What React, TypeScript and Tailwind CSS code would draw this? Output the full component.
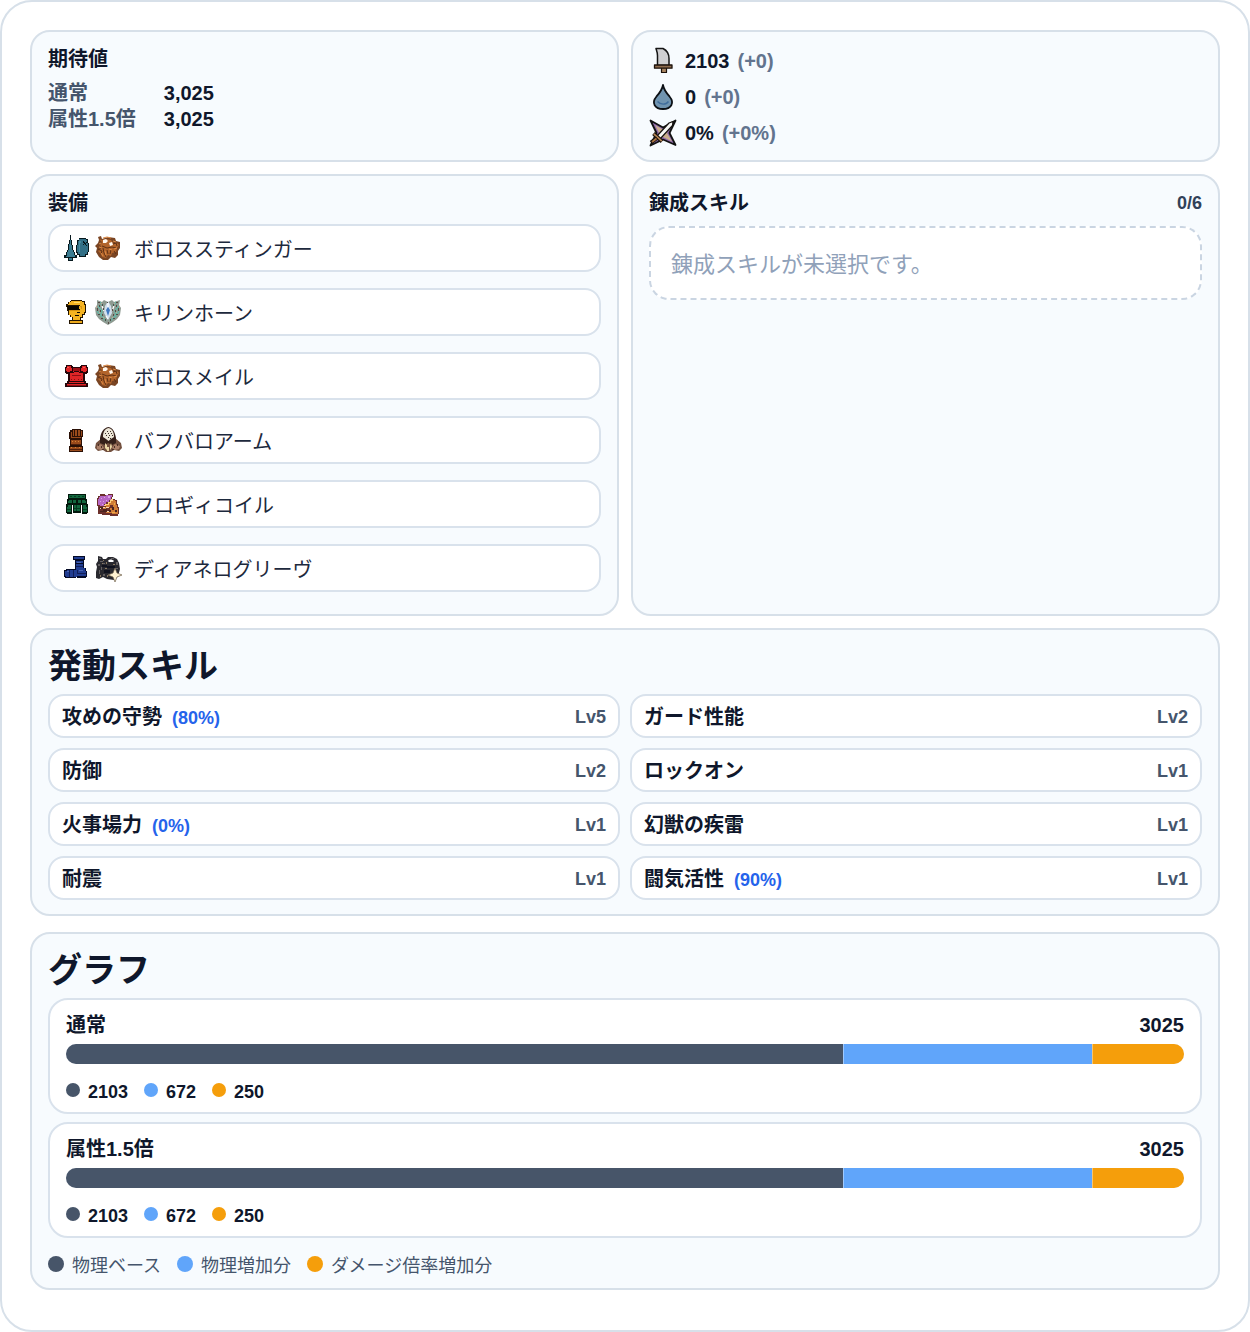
import type { ReactNode } from "react";

const FONT =
  "font-['Liberation_Sans','Noto_Sans_CJK_JP',sans-serif]";

function Icon({ label, children }: { label: string; children: ReactNode }) {
  return (
    <svg
      viewBox="0 0 28 28"
      className="h-7 w-7 shrink-0"
      role="img"
      aria-label={label}
      strokeLinejoin="round"
    >
      {children}
    </svg>
  );
}

/* Status icons */

function AttackIcon() {
  return (
    <Icon label="攻撃力">
      <path d="M7 1.500h7c4 2 6 5 6 10v7H8.500V8.500C8.500 5 7.500 3.500 7 1.500Z" fill="#cfcfd1" stroke="#151515" strokeWidth="1.500" />
      <path d="M12.500 20h5v5.500h-5z" fill="#a98561" stroke="#1c120b" strokeWidth="1.200" />
      <path d="M5.500 18h17.500v3.200h-17.500z" fill="#8d6b4d" stroke="#1c120b" strokeWidth="1.300" />
    </Icon>
  );
}

function ElementIcon() {
  return (
    <Icon label="属性値">
      <path d="M14 2c.8 5 3 7.500 6.500 11.500C26 20 22 26 14 26S2 20 7.500 13.500C11 9.500 13.200 7 14 2Z" fill="#7094b0" stroke="#0c1015" strokeWidth="1.800" />
      <path d="M8.500 18.500c3 3.500 8.500 3.500 11 0" fill="none" stroke="#3f6d9c" strokeWidth="1.400" />
    </Icon>
  );
}

function AffinityIcon() {
  return (
    <Icon label="会心率">
      <path d="M1.500 1.500 14 8.500 26.500 1.500 20.500 14l6 12L14 20.500 1.500 26.500 7.500 14Z" fill="#8f6bab" stroke="#111" strokeWidth="1.800" />
      <path d="m6 6 8 4.500L22 6l-4 8 5 8.500-9-4.500-8 4 4-8Z" fill="#c9ad8c" />
      <path d="m8 17 3 3L23.500 6.500l.5-4-4 1.500L8 17Z" fill="#f8f8f5" stroke="#15110f" strokeWidth="1.200" />
      <path d="m4.500 14.500 8.500 8" stroke="#17100b" strokeWidth="3.800" />
      <path d="m4.800 14.800 8 7.400" stroke="#b88755" strokeWidth="1.700" />
      <path d="m8 19-6 4.500" stroke="#17100b" strokeWidth="4" />
      <path d="m7.500 19.500-4.500 3.400" stroke="#a97443" strokeWidth="1.900" />
    </Icon>
  );
}

/* Equipment icons */

function LanceIcon() {
  return (
    <Icon label="ランス">
      <g shapeRendering="crispEdges">
        <path d="M8 1h1v5h1v5h1v5h1v2h1v3h2v3h-4v3H6v-3H2v-3h2v-3h1v-2h1v-6h1V6h1z" fill="#07181d" />
        <path d="M8 6h1v5h1v5h1v2h1v3h1v2H4v-1h1v-4h1v-2h1v-6h1zM7 24h3v2H7z" fill="#3b7c91" />
        <path d="M17 4h7v1h2v4h1v9h-1v3h-2v2h-7v-2h-2v-2h-1v-8h1V6h2z" fill="#07181d" />
        <path d="M17 5h7v1h1v3h1v9h-1v2h-2v2h-5v-2h-2v-2h-1v-7h1V7h1z" fill="#326f86" />
        <path d="M17 7h2v2h-1v9h-1z" fill="#478b9f" />
        <path d="M21 7h1v1h1v1h1V8h1v1h-1v2h1v1h-1v-1h-1v-1h-1v1h-1v-1h1V9h-1z" fill="#07181d" />
      </g>
    </Icon>
  );
}

function HelmIcon() {
  return (
    <Icon label="頭">
      <g shapeRendering="crispEdges">
        <path d="M9 2h11v1h3v3h1v9h-1v2h-2v3h-2v2h2v4H7v-4h3v-3H8v-2H6v-4H5V9H4V6h2V4h2V3h1z" fill="#241500" />
        <path d="M9 3h11v1h2v3h1v7h-1v2h-2v3h-2v3H11v-3H9v-2H7v-5h10V8h1V7H6V6h1V4h2z" fill="#f4b321" />
        <path d="M7 12h11v1H7zM18 8h2v1h-2zM19 9h1v2h-1z" fill="#d59312" />
        <path d="M5 8h12v3h1v1H6V9H5zM15 14h3v1h-3zM13 17h4v1h-4z" fill="#080600" />
        <path d="M8 23h12v2H8z" fill="#eca91c" />
        <path d="M12 4h6v1h-6z" fill="#ffdc68" />
      </g>
    </Icon>
  );
}

function ChestIcon() {
  return (
    <Icon label="胴">
      <g shapeRendering="crispEdges">
        <path d="M4 3h6v1h1v1h7V4h1V3h6v2h1v6h-1v1h-2v7h1v2h2v4H3v-4h2v-2h1v-7H4v-1H3V5h1z" fill="#26060a" />
        <path d="M5 4h4v2h1v3H8v1H5V9H4V6h1zM20 4h4v2h1v3h-1v1h-3V9h-2V6h1zM8 11h13v8H8zM7 20h15v1H7zM5 22h19v2H5z" fill="#df2527" />
        <path d="M11 6h7v3h-7z" fill="#9c1016" />
        <path d="M11 9h1v1h-1zM17 9h1v1h-1zM12 10h5v1h-5z" fill="#df2527" />
        <path d="M10 13h9v1h-9zM9 17h1v1H9zM12 17h1v1h-1zM16 17h1v1h-1zM19 17h1v1h-1zM5 23h19v1H5z" fill="#8b0f14" />
        <path d="M5 5h2v1H5zM21 5h2v1h-2z" fill="#ff5a50" />
      </g>
    </Icon>
  );
}

function ArmIcon() {
  return (
    <Icon label="腕">
      <g shapeRendering="crispEdges">
        <path d="M10 3h9v1h2v7h-1v9h1v6H7v-6h1v-7H7V6h1V4h2z" fill="#2a1006" />
        <path d="M9 6h1v5H9zM11 4h1v6h-1zM13 4h2v6h-2zM16 4h2v6h-2zM19 5h1v5h-1zM9 11h10v1H9zM9 14h10v4H9zM8 21h12v4H8z" fill="#9a4a1b" />
        <path d="M9 18h10v1H9zM8 23h12v1H8z" fill="#51200c" />
        <path d="M10 15h1v1h-1zM13 15h1v1h-1zM16 15h1v1h-1zM9 21h1v1H9zM13 21h1v1h-1zM17 21h1v1h-1z" fill="#d68334" />
      </g>
    </Icon>
  );
}

function WaistIcon() {
  return (
    <Icon label="腰">
      <g shapeRendering="crispEdges">
        <path d="M6 4h18v5h1v5h1v9h-1v1h-5v-9h-1v8h-8v-8h-1v9H5v-1H4v-9h1V9h1z" fill="#03180d" />
        <path d="M7 5h16v3H7zM7 10h3v3H6v-2h1zM11 10h3v3h-3zM16 10h3v3h-3zM20 10h3v1h1v2h-4zM6 15h3v7H5v-5h1zM12 15h6v6h-6zM21 15h3v2h1v5h-4z" fill="#12663d" />
        <path d="M8 6h2v1H8zM12 6h2v1h-2zM16 6h2v1h-2zM20 6h2v1h-2zM5 19h4v1H5zM12 18h6v1h-6zM21 19h4v1h-4zM14 15h1v6h-1z" fill="#063d22" />
      </g>
    </Icon>
  );
}

function BootsIcon() {
  return (
    <Icon label="脚">
      <g shapeRendering="crispEdges">
        <path d="M11 2h12v4h-1v8h2v3h1v6h-1v1h-9v-1h-1v1H3v-1H2v-7h2v-1h9V6h-2z" fill="#050b27" />
        <path d="M12 3h10v2H12zM14 7h7v2h-7zM14 10h7v4h2v3h1v5h-9v1H4v-1H3v-5h2v-1h9z" fill="#213d91" />
        <path d="M14 12h7v1h-7zM7 16h1v7H7zM11 16h1v7h-1zM15 16h1v4h-1zM16 19h8v1h-8z" fill="#101e59" />
        <path d="M5 17h2v1H5zM15 8h4v1h-4zM17 16h4v1h-4z" fill="#4b66b2" />
      </g>
    </Icon>
  );
}

/* Monster icons */

function BarrothIcon() {
  return (
    <Icon label="ボルボロス">
      <path d="M4 3 7 2l1 3 6-2 7 1 1 3 4 1v6l-2 3v4l-3 3-4-1-3 3H9l-4-3-3-5 1-4-2-2 3-3 1-3Z" fill="#7a4523" />
      <path d="M5 5 8 8l-2 3 2 3-4 3 3 3 1 3 4 1 2-3 3 1 1-3 4-1 1-4 2-3-2-2-3 1-3-4-5-1-4 1Z" fill="#b2642b" />
      <path d="m9 6 3-1 2 2-2 2H9ZM15 9l3-1 1 3-3 1Z" fill="#fff8ef" />
      <path d="m4 15 4 2-1 3M9 14l1 5 2 4M13 16l1 4M17 16l-1 4M8 12l5 2 5-1 4 1M19 10l3-1 1 3M20 17l2 3" fill="none" stroke="#5f3115" strokeWidth="1" />
      <path d="m5 13 3 1M11 17l1 4M7 19l2 3M15 15l3 1M9 4l4-1 4 1M19 7l3 1M20 15l3-1M5 10l2-1" fill="none" stroke="#de8b46" strokeWidth="1" />
    </Icon>
  );
}

function KirinIcon() {
  return (
    <Icon label="キリン">
      <path d="m3 2 5 2 2-2 4 2 4-2 2 2 6-2-1 5 2 3-1 7-3 4-4 3-5 3-5-3-4-3-3-4L1 10l2-3Z" fill="#8e9a91" />
      <path d="m4 8 4 5-1 4 5 6M25 8l-4 5 1 4-6 6M3 13l4 5M25 13l-4 6M6 4l3 4M22 4l-3 4" fill="none" stroke="#69b3a3" strokeWidth="1.700" />
      <path d="m14 3 3 5 1 7-4 7-4-7 1-7Z" fill="#d2e0ee" />
      <path d="m14 9 2 3-2 6-2-6Z" fill="#3f79c2" />
      <path d="m8 8 2 5M20 8l-2 5M14 5v4M12 18l2 3" fill="none" stroke="#fff" strokeWidth="1.200" />
      <g shapeRendering="crispEdges">
        <path d="M4 4h2v1H4zM8 6h1v2H8zM5 7h1v2H5zM3 10h1v3H3zM6 12h1v2H6zM4 16h2v1H4zM8 16h1v2H8zM7 20h2v1H7zM11 21h1v2h-1zM9 10h1v2H9zM22 4h2v1h-2zM19 6h1v2h-1zM22 7h1v2h-1zM24 10h1v3h-1zM21 12h1v2h-1zM22 16h2v1h-2zM19 16h1v2h-1zM19 20h2v1h-2zM16 21h1v2h-1zM18 11h1v2h-1zM14 24h1v2h-1zM13 4h1v1h-1z" fill="#574c46" />
        <path d="M7 5h1v1H7zM2 8h1v2H2zM5 14h1v1H5zM9 19h1v1H9zM20 5h1v1h-1zM25 8h1v2h-1zM22 14h1v1h-1zM18 19h1v1h-1z" fill="#c6a892" />
      </g>
    </Icon>
  );
}

function BanbaroIcon() {
  return (
    <Icon label="バフバロ">
      <path d="m8 12-6 5-1 5 3 3 5-1 3 2h5l3-2 5 1 3-3-1-5-6-5Z" fill="#73503f" />
      <path d="m3 20 4-2 3 4-3 2-4-1ZM26 20l-5-2-3 4 3 2 4-1Z" fill="#ab8069" />
      <path d="M14.500 1C9 2 7 7 6 12v5l5 2 3-2 4 2 4-2v-5C21 6 19 2 14.500 1Z" fill="#35201a" />
      <path d="M14.500 2C10 3 9 7 9 11l3 2 2.500 2 2.500-2 3-2c0-4-1-8-5.500-9Z" fill="#eee7d8" />
      <path d="m11 17 2 2v5l-2-2ZM17 17l-1 3v4l2-3ZM13 21h2v4h-2Z" fill="#ead6a5" />
      <g shapeRendering="crispEdges">
        <path d="M13 5h1v1h-1zM16 5h1v1h-1zM11 7h1v1h-1zM14 7h1v1h-1zM17 7h1v1h-1zM12 9h1v1h-1zM15 9h1v1h-1zM18 9h1v1h-1zM14 11h1v1h-1zM16 12h1v1h-1z" fill="#3b3028" />
        <path d="M4 18h1v2H4zM7 20h1v2H7zM8 23h2v1H8zM23 18h1v2h-1zM20 20h1v2h-1zM18 23h2v1h-2z" fill="#4a3026" />
      </g>
    </Icon>
  );
}

function WroggiIcon() {
  return (
    <Icon label="ドスフロギィ">
      <g shapeRendering="crispEdges">
        <path d="M6 4h5v1h3V4h5v3h-1v2h3v1h2v4h1v3h1v7h-1v2h-8v-1H8v-1H4v-8H3V8h1V6h2z" fill="#6c302b" />
        <path d="M6 6h6V5h6v2h-1v3h-2v2h-3v2h-2v2H6v-1H4V9h1V7h1z" fill="#b666c5" />
        <path d="M7 8h1v1H7zM10 7h1v1h-1zM14 6h2v2h-2zM6 11h1v1H6zM9 11h1v1H9zM12 10h1v1h-1zM8 14h1v1H8z" fill="#dda0e6" />
        <path d="M19 10h2v1h1v4h1v3h1v6h-6v-1h-6v-2h4v-3h3v-3h-3v2h-4v2H9v-2h3v-2h3v-2h2v-2h2z" fill="#d27d35" />
        <path d="M17 9h2v2h-2v2h-2v2h-3v1h-2v-1h1v-1h3v-2h2v-2h1z" fill="#ffd27f" />
        <path d="M5 17h4v2H5zM9 19h4v2H9zM6 21h10v1H6zM14 20h3v2h-3zM18 17h2v3h-2zM21 20h2v2h-2z" fill="#4b241f" />
        <path d="M6 18h1v1H6zM9 17h2v1H9zM12 17h3v1h-3zM13 21h2v1h-2z" fill="#f5d5b6" />
        <path d="M18 22h3v1h-3zM20 13h1v2h-1z" fill="#efac4a" />
      </g>
    </Icon>
  );
}

function DiablosIcon() {
  return (
    <Icon label="ディアブロス亜種">
      <path d="m4 2 4 1 1 2h3l2-2h5l4 2 2 4 1 6-2 7-4 4-7-1-4-2-4 2-3-1V18l1-5-1-3 2-3Z" fill="#29292f" />
      <path d="M14 7c1-2 4-2 6 0l-1 1h-4Z" fill="#fff" />
      <g shapeRendering="crispEdges">
        <path d="M5 4h2v1H5zM6 7h3v1H6zM4 10h2v2H4zM9 9h2v1H9zM17 4h3v1h-3zM22 8h2v3h-2zM5 16h1v4H5zM9 20h2v2H9zM21 14h3v1h-3zM7 13h1v3H7z" fill="#625f61" />
        <path d="M8 11h5v2H8zM13 12h8v2h-8zM10 16h6v3h-6z" fill="#10121e" />
        <path d="M8 9h1v1H8zM12 8h1v2h-1zM19 10h2v1h-2zM6 21h1v2H6zM13 21h1v2h-1zM11 14h2v1h-2zM9 6h1v1H9z" fill="#8b7a62" />
      </g>
      <path d="m21 14 2 5 5 2-5 2-2 5-2-5-5-2 5-2Z" fill="#fff3d2" stroke="#6f604c" strokeWidth=".7" />
    </Icon>
  );
}

const EQUIPMENT = [
  { name: "ボロススティンガー", part: LanceIcon, monster: BarrothIcon },
  { name: "キリンホーン", part: HelmIcon, monster: KirinIcon },
  { name: "ボロスメイル", part: ChestIcon, monster: BarrothIcon },
  { name: "バフバロアーム", part: ArmIcon, monster: BanbaroIcon },
  { name: "フロギィコイル", part: WaistIcon, monster: WroggiIcon },
  { name: "ディアネログリーヴ", part: BootsIcon, monster: DiablosIcon },
];

const STATS = [
  { icon: AttackIcon, value: "2103", bonus: "(+0)" },
  { icon: ElementIcon, value: "0", bonus: "(+0)" },
  { icon: AffinityIcon, value: "0%", bonus: "(+0%)" },
];

const SKILLS = [
  { name: "攻めの守勢", rate: "(80%)", level: 5 },
  { name: "ガード性能", level: 2 },
  { name: "防御", level: 2 },
  { name: "ロックオン", level: 1 },
  { name: "火事場力", rate: "(0%)", level: 1 },
  { name: "幻獣の疾雷", level: 1 },
  { name: "耐震", level: 1 },
  { name: "闘気活性", rate: "(90%)", level: 1 },
];

const SEGMENTS = [
  { label: "物理ベース", value: 2103, color: "bg-[#475569]" },
  { label: "物理増加分", value: 672, color: "bg-[#60a5fa]" },
  { label: "ダメージ倍率増加分", value: 250, color: "bg-[#f59e0b]" },
];

const TOTAL = 3025;

const panel = "rounded-[20px] border-2 border-[#d7e0e9] bg-[#f7fbfe] px-4";
const card = "border-2 border-[#d9e2ec] bg-white";

export default function App() {
  return (
    <main
      className={`rounded-[32px] border-2 border-[#d7e0e9] bg-white px-7 pt-7 pb-10 text-xl leading-[26px] text-slate-900 ${FONT}`}
      lang="ja"
    >
      <div className="grid grid-cols-2 gap-3">
        {/* Expected damage */}
        <section className={`${panel} py-[14px]`}>
          <h2 className="font-bold">期待値</h2>
          <dl className="mt-2 grid grid-cols-[auto_1fr] gap-x-7 font-bold">
            <dt className="text-slate-600">通常</dt>
            <dd>3,025</dd>
            <dt className="text-slate-600">属性1.5倍</dt>
            <dd>3,025</dd>
          </dl>
        </section>

        {/* Status */}
        <section className={`${panel} pt-[15px] pb-[13px]`}>
          <ul className="space-y-2">
            {STATS.map(({ icon: StatIcon, value, bonus }, i) => (
              <li key={i} className="flex h-7 items-center gap-2 font-bold">
                <StatIcon />
                <span>{value}</span>
                <span className="text-slate-500">{bonus}</span>
              </li>
            ))}
          </ul>
        </section>

        {/* Equipment */}
        <section className={`${panel} pt-[14px] pb-[22px]`}>
          <h2 className="font-bold">装備</h2>
          <ul className="mt-2 space-y-4">
            {EQUIPMENT.map(({ name, part: PartIcon, monster: MonsterIcon }) => (
              <li key={name} className={`${card} flex h-12 items-center rounded-2xl px-3`}>
                <span className="flex gap-1">
                  <PartIcon />
                  <MonsterIcon />
                </span>
                <span className="ml-3 pt-[3px] text-slate-800">{name}</span>
              </li>
            ))}
          </ul>
        </section>

        {/* Augmented skills */}
        <section className={`${panel} py-[14px]`}>
          <div className="flex items-center justify-between">
            <h2 className="font-bold">錬成スキル</h2>
            <span className="text-lg leading-[26px] font-bold text-slate-700">0/6</span>
          </div>
          <p className="mt-[10px] rounded-[20px] border-2 border-dashed border-slate-300 bg-white px-5 pt-[22px] pb-[18px] text-[22px] leading-[30px] text-slate-400">
            錬成スキルが未選択です。
          </p>
        </section>
      </div>

      {/* Active skills */}
      <section className={`${panel} mt-3 py-[14px]`}>
        <h2 className="text-[34px] leading-[44px] font-bold">発動スキル</h2>
        <ul className="mt-[6px] grid grid-cols-2 gap-[10px]">
          {SKILLS.map(({ name, rate, level }) => (
            <li
              key={name}
              className={`${card} flex h-11 items-center justify-between rounded-2xl px-3 pt-[2px] font-bold`}
            >
              <span className="flex items-baseline gap-[10px]">
                {name}
                {rate && <span className="text-lg leading-[26px] text-[#2563eb]">{rate}</span>}
              </span>
              <span className="text-lg leading-[26px] text-slate-600">Lv{level}</span>
            </li>
          ))}
        </ul>
      </section>

      {/* Graph */}
      <section className={`${panel} mt-4 py-[14px]`}>
        <h2 className="text-[34px] leading-[44px] font-bold">グラフ</h2>
        <div className="mt-[6px] space-y-2">
          {["通常", "属性1.5倍"].map((title) => (
            <div key={title} className={`${card} rounded-[20px] px-4 py-3 font-bold`}>
              <div className="flex justify-between">
                <h3>{title}</h3>
                <span>{TOTAL}</span>
              </div>
              <div className="mt-[6px] flex h-5 overflow-hidden rounded-full bg-slate-200">
                {SEGMENTS.map((s) => (
                  <div
                    key={s.label}
                    className={`${s.color} border-l border-white/40 first:border-l-0`}
                    style={{ width: `${(s.value / TOTAL) * 100}%` }}
                  />
                ))}
              </div>
              <ul className="mt-4 flex gap-4 text-lg leading-5">
                {SEGMENTS.map((s) => (
                  <li key={s.label} className="flex h-5 items-center gap-2">
                    <span className={`h-[14px] w-[14px] rounded-full ${s.color}`} />
                    <span className="pt-[3px]">{s.value}</span>
                  </li>
                ))}
              </ul>
            </div>
          ))}
        </div>
        <ul className="mt-4 flex gap-4 text-lg leading-5 text-slate-600">
          {SEGMENTS.map((s) => (
            <li key={s.label} className="flex h-5 items-center gap-2">
              <span className={`h-4 w-4 rounded-full ${s.color}`} />
              <span className="pt-[3px]">{s.label}</span>
            </li>
          ))}
        </ul>
      </section>
    </main>
  );
}
